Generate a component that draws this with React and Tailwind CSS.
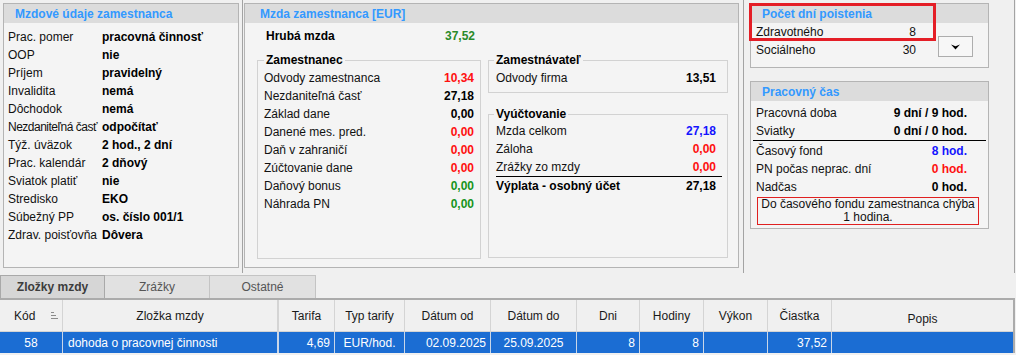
const RED = 'text-[#ff1010]'
const GREEN = 'text-[#16941c]'
const BLUE = 'text-[#1414ff]'
const BLACK = 'text-black'

const udaje = [
  ['Prac. pomer', 'pracovná činnosť'],
  ['OOP', 'nie'],
  ['Príjem', 'pravidelný'],
  ['Invalidita', 'nemá'],
  ['Dôchodok', 'nemá'],
  ['Nezdaniteľná časť', 'odpočítať'],
  ['Týž. úväzok', '2 hod., 2 dní'],
  ['Prac. kalendár', '2 dňový'],
  ['Sviatok platiť', 'nie'],
  ['Stredisko', 'EKO'],
  ['Súbežný PP', 'os. číslo 001/1'],
  ['Zdrav. poisťovňa', 'Dôvera'],
]

const zamestnanec = [
  ['Odvody zamestnanca', '10,34', RED],
  ['Nezdaniteľná časť', '27,18', BLACK],
  ['Základ dane', '0,00', BLACK],
  ['Danené mes. pred.', '0,00', RED],
  ['Daň v zahraničí', '0,00', RED],
  ['Zúčtovanie dane', '0,00', RED],
  ['Daňový bonus', '0,00', GREEN],
  ['Náhrada PN', '0,00', GREEN],
]

const cols = [
  { name: 'Kód', val: '58', align: 'justify-center', w: 'w-[63px]' },
  { name: 'Zložka mzdy', val: 'dohoda o pracovnej činnosti', align: 'justify-start pl-[5px]', w: 'w-[216px] border-r-2' },
  { name: 'Tarifa', val: '4,69', align: 'justify-end pr-[4px]', w: 'w-[56px]' },
  { name: 'Typ tarify', val: 'EUR/hod.', align: 'justify-center', w: 'w-[70px]' },
  { name: 'Dátum od', val: '02.09.2025', align: 'justify-end pr-[4px]', w: 'w-[86px]' },
  { name: 'Dátum do', val: '25.09.2025', align: 'justify-center', w: 'w-[86px]' },
  { name: 'Dni', val: '8', align: 'justify-end pr-[4px]', w: 'w-[63px]' },
  { name: 'Hodiny', val: '8', align: 'justify-end pr-[4px]', w: 'w-[64px]' },
  { name: 'Výkon', val: '', align: 'justify-end pr-[4px]', w: 'w-[64px]' },
  { name: 'Čiastka', val: '37,52', align: 'justify-end pr-[4px]', w: 'w-[64px]' },
  { name: 'Popis', val: '', align: 'justify-center', w: 'flex-1 border-r-0' },
]

function Panel({ title, className = '', titleClass = 'pl-[11px]', children }) {
  return (
    <div className={`border border-[#b4b4b4] bg-[#f4f4f4] ${className}`}>
      <div className={`flex h-[19px] items-center bg-[#dcdcdc] text-[12px] font-bold text-[#3399ff] ${titleClass}`}>
        {title}
      </div>
      {children}
    </div>
  )
}

function Row({ label, value, color = BLACK, className = '' }) {
  return (
    <div className={`flex h-[18px] items-center justify-between leading-[18px] ${className}`}>
      <span className="whitespace-nowrap">{label}</span>
      <span className={`font-bold ${color}`}>{value}</span>
    </div>
  )
}

function Group({ title, className = '', legendClass = '', children }) {
  return (
    <fieldset className={`border border-[#d2d2d2] ${className}`}>
      <legend className={`px-[2px] text-[12px] font-bold leading-[14px] text-black ${legendClass}`}>{title}</legend>
      {children}
    </fieldset>
  )
}

function SortIcon() {
  return (
    <svg width="8" height="7" viewBox="0 0 8 7" className="ml-[16px]">
      <path d="M0 0.5h3M0 3.5h5M0 6.5h7" stroke="#8c8c8c" strokeWidth="1" />
    </svg>
  )
}

export default function App() {
  return (
    <div className="h-[355px] w-[1016px] overflow-hidden bg-[#f0f0f0] font-['Liberation_Sans',Arial,sans-serif] text-[12px] text-[#111]">
      {/* horná časť — tri stĺpce */}
      <div className="flex h-[273px]">
        <div className="w-[243px] border-r border-[#a3a3a3] pl-[3px] pt-[3px]">
          <Panel title="Mzdové údaje zamestnanca" className="h-[265px] w-[236px]">
            <div className="pl-[4px] pt-[5px]">
              {udaje.map(([l, v]) => (
                <div key={l} className="flex h-[18px] items-center">
                  <span className={`w-[94px] whitespace-nowrap ${l.length > 16 ? 'tracking-[-0.5px]' : ''}`}>{l}</span>
                  <span className="whitespace-nowrap font-bold text-black">{v}</span>
                </div>
              ))}
            </div>
          </Panel>
        </div>

        <div className="w-[501px] border-r border-[#a3a3a3] pl-[1px] pt-[3px]">
          <Panel title="Mzda zamestnanca [EUR]" titleClass="pl-[15px]" className="h-[265px] w-[495px]">
            <div className="flex gap-[7px] pl-[12px]">
              <div className="w-[224px]">
                <div className="mt-[4px] flex h-[18px] items-center justify-between pl-[9px] pr-[6px]">
                  <span className="font-bold text-black">Hrubá mzda</span>
                  <span className="font-bold text-[#2a8a2a]">37,52</span>
                </div>
                <Group title="Zamestnanec" className="mt-[8px] h-[206px] px-[6px] pt-[2px]">
                  {zamestnanec.map(([l, v, c]) => (
                    <Row key={l} label={l} value={v} color={c} />
                  ))}
                </Group>
              </div>
              <div className="w-[240px] pt-[30px]">
                <Group title="Zamestnávateľ" className="h-[40px] pl-[7px] pr-[11px] pt-[2px]" legendClass="-ml-[2px]">
                  <Row label="Odvody firma" value="13,51" />
                </Group>
                <Group title="Vyúčtovanie" className="mt-[14px] h-[151px] pt-[1px]" legendClass="ml-[5px]">
                  <div className="pl-[7px] pr-[11px]">
                    <Row label="Mzda celkom" value="27,18" color={BLUE} />
                    <Row label="Záloha" value="0,00" color={RED} />
                    <Row label="Zrážky zo mzdy" value="0,00" color={RED} />
                  </div>
                  <div className="ml-[7px] mr-[5px] flex h-[19px] items-center justify-between border-t border-black pr-[6px] font-bold text-black">
                    <span>Výplata - osobný účet</span>
                    <span>27,18</span>
                  </div>
                </Group>
              </div>
            </div>
          </Panel>
        </div>

        <div className="relative w-[271px] border-r border-[#a3a3a3] pl-[6px] pt-[3px]">
          <Panel title="Počet dní poistenia" className="h-[65px] w-[239px]">
            <div className="flex">
              <div className="ml-[5px] w-[160px]">
                <div className="flex h-[18px] items-center justify-between">
                  <span>Zdravotného</span>
                  <span>8</span>
                </div>
                <div className="flex h-[18px] items-center justify-between">
                  <span>Sociálneho</span>
                  <span>30</span>
                </div>
              </div>
              <button className="ml-[22px] mt-[13px] flex h-[21px] w-[35px] items-center justify-center border border-[#adadad] bg-[#f7f7f7]">
                <svg width="9" height="6" viewBox="0 0 9 6">
                  <path d="M0 0.5 L4.5 2.2 L9 0.5 L4.5 5.5 Z" fill="#000" />
                </svg>
              </button>
            </div>
          </Panel>

          <Panel title="Pracovný čas" className="mt-[13px] h-[148px] w-[239px]">
            <div className="mx-[2px] pt-[3px]">
              <div className="pl-[3px] pr-[19px]">
                <Row label="Pracovná doba" value="9 dní / 9 hod." />
                <Row label="Sviatky" value="0 dní / 0 hod." />
              </div>
              <div className="border-t border-black pl-[3px] pr-[19px]">
                <Row label="Časový fond" value="8 hod." color={BLUE} className="h-[19px]" />
                <Row label="PN počas neprac. dní" value="0 hod." color={RED} />
                <Row label="Nadčas" value="0 hod." />
              </div>
            </div>
            <div className="ml-[6px] mt-[1px] flex h-[28px] w-[222px] flex-col items-center justify-center border border-[#e02020] text-center leading-[13px]">
              <span>Do časového fondu zamestnanca chýba</span>
              <span>1 hodina.</span>
            </div>
          </Panel>

          {/* zvýraznenie */}
          <div className="absolute left-[5px] top-[3px] h-[38px] w-[187px] border-[3px] border-[#e41e26]" />
        </div>
      </div>

      {/* záložky */}
      <div className="mt-[2px] flex h-[23px] text-[12px]">
        <div className="flex w-[105px] items-center justify-center border border-b-0 border-[#a9a9a9] bg-[#d6d6d6] font-bold text-[#3c3c3c]">
          Zložky mzdy
        </div>
        <div className="flex w-[105px] items-center justify-center border border-b-0 border-l-0 border-[#c4c4c4] bg-[#e1e1e1] text-[#555]">
          Zrážky
        </div>
        <div className="flex w-[106px] items-center justify-center border border-b-0 border-l-0 border-[#c4c4c4] bg-[#e1e1e1] text-[#555]">
          Ostatné
        </div>
      </div>

      {/* mriežka */}
      <div className="w-[1015px] border-r-2 border-t-2 border-[#ababab]">
        <div className="flex h-[32px] border-b border-[#d4d4d4] bg-[#f0f0f0] text-[#1a1a1a]">
          {cols.map((c) => (
            <div
              key={c.name}
              className={`flex items-center border-r border-[#d4d4d4] ${c.w} ${
                c.name === 'Kód' ? 'justify-start pl-[14px]' : 'justify-center'
              } ${c.name === 'Popis' ? 'pt-[6px]' : ''}`}
            >
              {c.name}
              {c.name === 'Kód' && <SortIcon />}
            </div>
          ))}
        </div>
        <div className="flex h-[21px] bg-[#1b6dd3] text-white">
          {cols.map((c) => (
            <div key={c.name} className={`flex items-center whitespace-nowrap border-r border-[#c9d6e8] ${c.w} ${c.align}`}>
              {c.val}
            </div>
          ))}
        </div>
      </div>
    </div>
  )
}
